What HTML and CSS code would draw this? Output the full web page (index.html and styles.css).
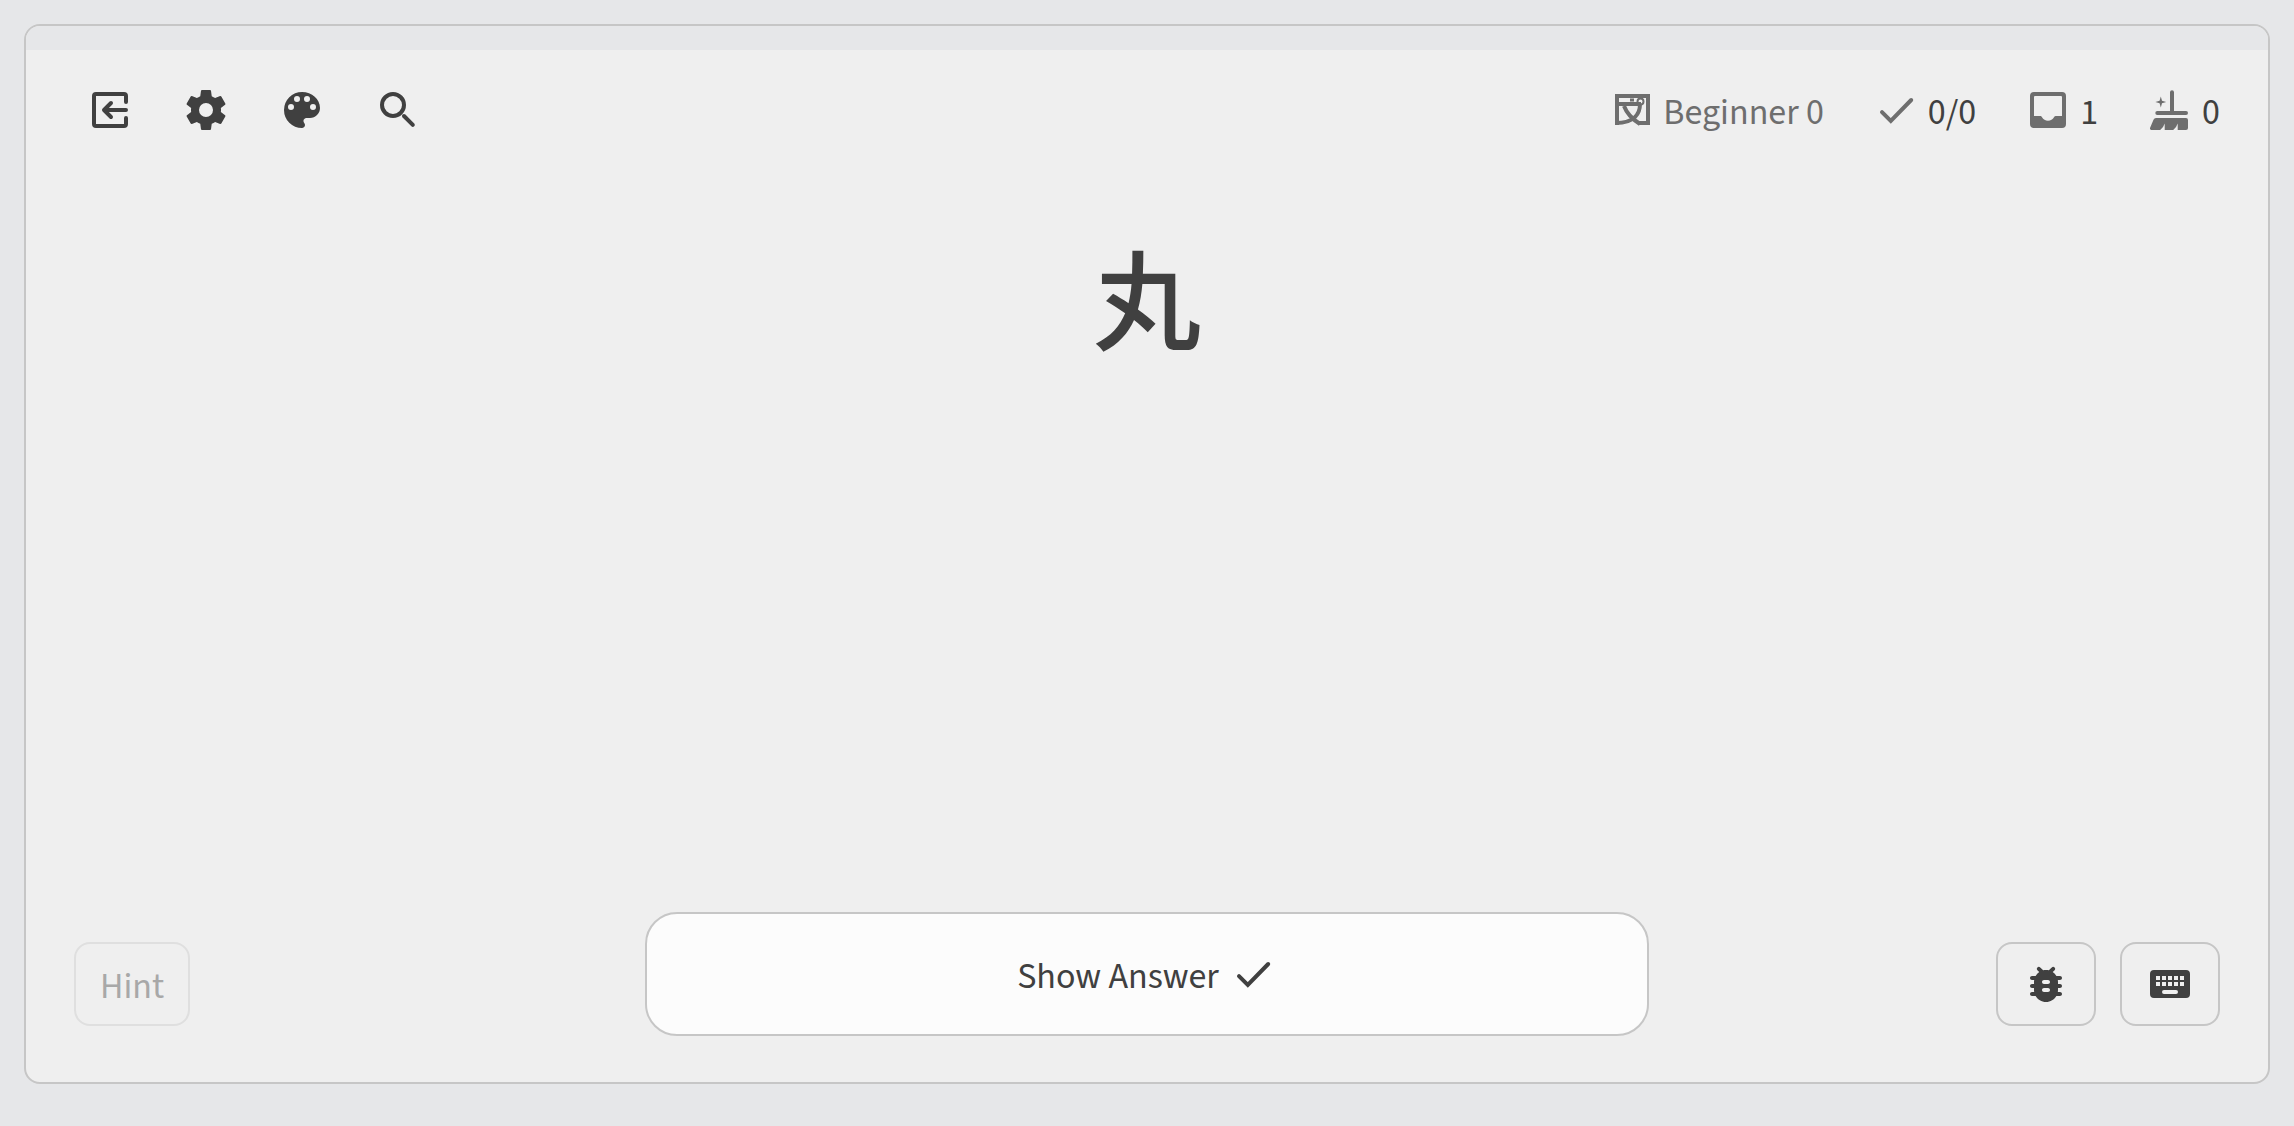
FILE: index.html
```html
<!DOCTYPE html>
<html lang="en">
<head>
<meta charset="utf-8">
<title>Review</title>
<meta name="viewport" content="width=device-width, initial-scale=1">
<link rel="stylesheet" href="styles.css">
</head>
<body>
<main class="card">
  <div class="progress"></div>
  <header class="toolbar">
    <nav class="actions" aria-label="Review tools">
      <button class="icon-button" type="button" aria-label="Exit">
        <svg class="icon" viewBox="0 0 24 24"><g fill="none" stroke="currentColor" stroke-width="2" stroke-linecap="round" stroke-linejoin="round"><path d="M20 8V5a1 1 0 0 0-1-1H5a1 1 0 0 0-1 1v14a1 1 0 0 0 1 1h14a1 1 0 0 0 1-1v-3"/><path d="M20 12H9.500M12.500 8.500 9 12l3.500 3.500"/></g></svg>
      </button>
      <button class="icon-button" type="button" aria-label="Settings">
        <svg class="icon" viewBox="0 0 24 24"><path d="M12,15.5A3.5,3.5 0 0,1 8.5,12A3.5,3.5 0 0,1 12,8.5A3.5,3.5 0 0,1 15.5,12A3.5,3.5 0 0,1 12,15.5M19.43,12.97C19.47,12.65 19.5,12.33 19.5,12C19.5,11.67 19.47,11.34 19.43,11L21.54,9.37C21.73,9.22 21.78,8.95 21.66,8.73L19.66,5.27C19.54,5.05 19.27,4.96 19.05,5.05L16.56,6.05C16.04,5.66 15.5,5.32 14.87,5.07L14.5,2.42C14.46,2.18 14.25,2 14,2H10C9.75,2 9.54,2.18 9.5,2.42L9.13,5.07C8.5,5.32 7.96,5.66 7.44,6.05L4.95,5.05C4.73,4.96 4.46,5.05 4.34,5.27L2.34,8.73C2.21,8.95 2.27,9.22 2.46,9.37L4.57,11C4.53,11.34 4.5,11.67 4.5,12C4.5,12.33 4.53,12.65 4.57,12.97L2.46,14.63C2.27,14.78 2.21,15.05 2.34,15.27L4.34,18.73C4.46,18.95 4.73,19.03 4.95,18.95L7.44,17.94C7.96,18.34 8.5,18.68 9.13,18.93L9.5,21.58C9.54,21.82 9.75,22 10,22H14C14.25,22 14.46,21.82 14.5,21.58L14.87,18.93C15.5,18.67 16.04,18.34 16.56,17.94L19.05,18.95C19.27,19.03 19.54,18.95 19.66,18.73L21.66,15.27C21.78,15.05 21.73,14.78 21.54,14.63L19.43,12.97Z"/></svg>
      </button>
      <button class="icon-button" type="button" aria-label="Theme">
        <svg class="icon" viewBox="0 0 24 24"><path fill-rule="evenodd" d="M12 3a9 9 0 0 0 0 18c.83 0 1.500-.67 1.500-1.500 0-.39-.15-.74-.39-1.010-.23-.26-.38-.61-.38-.99 0-.83.67-1.500 1.500-1.500H16c2.760 0 5-2.240 5-5 0-4.420-4.030-8-9-8zM5 10.500a1.500 1.500 0 1 0 3 0a1.500 1.500 0 1 0-3 0zM8 6.500a1.500 1.500 0 1 0 3 0a1.500 1.500 0 1 0-3 0zM13 6.500a1.500 1.500 0 1 0 3 0a1.500 1.500 0 1 0-3 0zM16 10.500a1.500 1.500 0 1 0 3 0a1.500 1.500 0 1 0-3 0z"/></svg>
      </button>
      <button class="icon-button" type="button" aria-label="Search">
        <svg class="icon" viewBox="0 0 24 24"><g fill="none" stroke="currentColor" stroke-width="2"><circle cx="9.500" cy="9.500" r="5.500"/><path stroke-linecap="round" d="m15 15 4.400 4.400"/></g></svg>
      </button>
    </nav>
    <div class="stats">
      <span class="stat stat-muted">
        <svg class="icon" viewBox="-2 0 48 48"><g fill="none" stroke="currentColor"><path stroke-width="4" d="M8 39V10h31v27H30"/><path stroke-width="4" d="M10 18h22M31 18c0 9-5 19-24 19"/><path stroke-width="4" d="M15 20c3 8 8 13 16 18"/><circle stroke-width="2" cx="31.500" cy="15.500" r="3"/></g><path d="M21 12.500h4v3h-4z"/></svg>
        <span class="label">Beginner 0</span>
      </span>
      <span class="stat">
        <svg class="icon" viewBox="0 0 24 24" role="img" aria-label="Correct"><path fill="none" stroke="currentColor" stroke-width="2" stroke-linecap="round" d="m5 13.100 4.400 4.400L19.600 7"/></svg>
        <span class="label">0/0</span>
      </span>
      <span class="stat">
        <svg class="icon" viewBox="0 0 24 24" role="img" aria-label="Queue"><path fill-rule="evenodd" d="M19 3H5a2 2 0 0 0-2 2v14a2 2 0 0 0 2 2h14a2 2 0 0 0 2-2V5a2 2 0 0 0-2-2zM19 15h-3.100c-.4 0-.7.250-.9.600a3.450 3.450 0 0 1-6 0c-.2-.350-.5-.600-.9-.600H5V5.600c0-.35.25-.6.600-.6h12.800c.35 0 .6.250.6.600z"/></svg>
        <span class="label">1</span>
      </span>
      <span class="stat">
        <svg class="icon" viewBox="2 0 48 48" role="img" aria-label="Leeches"><path d="M26 25V6.300a2 2 0 0 1 4 0V25h12a2 2 0 0 1 0 4H13.300a2 2 0 0 1 0-4zM16.800 10.600l1.200 4.200 4.200 1.200-4.200 1.200-1.200 4.200-1.200-4.200-4.200-1.200 4.200-1.200zM12 32h30a2 2 0 0 1 2 2v8a2 2 0 0 1-2 2h-8.300v-6.500q-1.200 4-4.500 6.500h-8.500v-6.500q-1.200 4-4.500 6.500H7.500a1.500 1.500 0 0 1-1.400-2.200l3.400-8a3 3 0 0 1 2.500-1.800z"/></svg>
        <span class="label">0</span>
      </span>
    </div>
  </header>
  <section class="prompt" lang="ja">丸</section>
  <footer class="controls">
    <div class="side">
      <button class="button hint" type="button" disabled><span class="label">Hint</span></button>
    </div>
    <button class="answer" type="button">
      <span class="label">Show Answer</span>
      <svg class="icon" viewBox="0 0 24 24"><path fill="none" stroke="currentColor" stroke-width="2" stroke-linecap="round" d="m5 13.100 4.400 4.400L19.600 7"/></svg>
    </button>
    <div class="side side-end">
      <button class="button" type="button" aria-label="Report a problem">
        <svg class="icon" viewBox="0 0 24 24"><path d="M19 8h-1.810c-.45-.78-1.070-1.450-1.820-1.960l.93-.93c.39-.39.39-1.020 0-1.410-.39-.39-1.020-.39-1.410 0l-1.470 1.470C12.960 5.060 12.490 5 12 5s-.96.060-1.410.17L9.110 3.700c-.39-.39-1.020-.39-1.410 0-.39.39-.39 1.020 0 1.410l.92.93C7.880 6.550 7.260 7.220 6.810 8H5c-.55 0-1 .45-1 1s.45 1 1 1h1.090c-.05.33-.09.66-.09 1v1H5c-.55 0-1 .45-1 1s.45 1 1 1h1v1c0 .34.04.67.09 1H5c-.55 0-1 .45-1 1s.45 1 1 1h1.810c1.040 1.790 2.970 3 5.190 3s4.150-1.210 5.190-3H19c.55 0 1-.45 1-1s-.45-1-1-1h-1.090c.05-.33.09-.66.09-1v-1h1c.55 0 1-.45 1-1s-.45-1-1-1h-1v-1c0-.34-.04-.67-.09-1H19c.55 0 1-.45 1-1s-.45-1-1-1zm-6 8h-2c-.55 0-1-.45-1-1s.45-1 1-1h2c.55 0 1 .45 1 1s-.45 1-1 1zm0-4h-2c-.55 0-1-.45-1-1s.45-1 1-1h2c.55 0 1 .45 1 1s-.45 1-1 1z"/></svg>
      </button>
      <button class="button" type="button" aria-label="Keyboard shortcuts">
        <svg class="icon" viewBox="0 0 24 24"><path fill-rule="evenodd" d="M4 5h16a2 2 0 0 1 2 2v10a2 2 0 0 1-2 2H4a2 2 0 0 1-2-2V7a2 2 0 0 1 2-2zM5 8v2h2V8zM8 8v2h2V8zM11 8v2h2V8zM14 8v2h2V8zM17 8v2h2V8zM5 11v2h2v-2zM8 11v2h2v-2zM11 11v2h2v-2zM14 11v2h2v-2zM17 11v2h2v-2zM9 15a1 1 0 0 0 0 2h6a1 1 0 0 0 0-2z"/></svg>
      </button>
    </div>
  </footer>
</main>
</body>
</html>
```
FILE: styles.css
```css
* {
  box-sizing: border-box;
}

body {
  margin: 0;
  padding: 24px 24px 42px;
  background: #e6e7e9;
  color: #404040;
  font: 36px/48px "Source Sans 3", "Noto Sans CJK JP", sans-serif;
}

button {
  margin: 0;
  padding: 0;
  border: 0;
  background: none;
  color: inherit;
  font: inherit;
}

.card {
  display: flex;
  flex-direction: column;
  min-height: calc(100vh - 66px);
  overflow: hidden;
  border: 2px solid #c6c6c6;
  border-radius: 16px;
  background: #efefef;
}

.progress {
  height: 24px;
  background: #e6e7e9;
}

.icon {
  display: block;
  flex: none;
  width: 48px;
  height: 48px;
  fill: currentColor;
}

.label {
  padding-top: 6px;
}

.toolbar {
  display: flex;
  justify-content: space-between;
  align-items: center;
  padding: 36px 48px 0;
}

.actions {
  display: flex;
  gap: 48px;
  padding-left: 12px;
}

.icon-button {
  display: block;
}

.stats {
  display: flex;
  gap: 48px;
}

.stat {
  display: flex;
  align-items: center;
  gap: 8px;
  height: 48px;
}

.stat .icon,
.stat-muted {
  color: #6e6e6e;
}

.prompt {
  flex: 1;
  padding-top: 94px;
  font-size: 108px;
  font-weight: 500;
  line-height: 160px;
  text-align: center;
}

.controls {
  display: grid;
  grid-template-columns: 1fr minmax(0, 1004px) 1fr;
  align-items: end;
  padding: 0 48px 46px;
}

.side {
  display: flex;
  gap: 24px;
  padding-bottom: 10px;
}

.side-end {
  justify-content: flex-end;
}

.button {
  display: flex;
  justify-content: center;
  align-items: center;
  height: 84px;
  padding: 0 24px;
  border: 2px solid #c6c6c6;
  border-radius: 16px;
}

.hint {
  border-color: #dfdfdf;
  color: #a8a8a8;
}

.answer {
  display: flex;
  justify-content: center;
  align-items: center;
  gap: 10px;
  height: 124px;
  border: 2px solid #c6c6c6;
  border-radius: 32px;
  background: #fcfcfc;
}
```
